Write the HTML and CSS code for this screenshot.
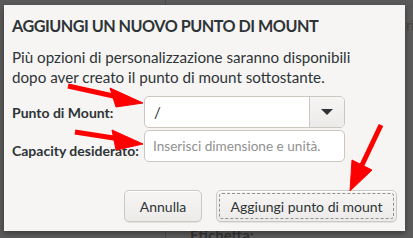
FILE: index.html
```html
<!DOCTYPE html>
<html>
<head>
<meta charset="utf-8">
<link rel="stylesheet" href="styles.css">
</head>
<body>
<div class="backdrop">
  <div class="bg-line"></div>
  <div class="bg-text bg-rip">rip</div>
  <div class="bg-text bg-eti">Etichetta:</div>
  <div class="dialog">
    <h1 class="title">AGGIUNGI UN NUOVO PUNTO DI MOUNT</h1>
    <p class="desc">Più opzioni di personalizzazione saranno disponibili<br>dopo aver creato il punto di mount sottostante.</p>
    <div class="form">
      <label class="lbl">Punto di Mount:</label>
      <div class="combo">
        <span class="combo-text">/</span>
        <span class="combo-btn"><span class="tri"></span></span>
      </div>
      <label class="lbl lbl2">Capacity desiderato:</label>
      <div class="entry">Inserisci dimensione e unità.</div>
    </div>
    <div class="actions">
      <button class="btn">Annulla</button>
      <button class="btn primary"><span class="focus">Aggiungi punto di mount</span></button>
    </div>
  </div>
  <svg class="arrows" width="413" height="238" viewBox="0 0 413 238">
    <g fill="#ff0000" stroke="#ff0000">
      <line x1="68" y1="86" x2="118" y2="97" stroke-width="5"/>
      <polygon points="143,103 110,88 116,107" stroke-width="1"/>
      <line x1="75" y1="132" x2="120" y2="139" stroke-width="5"/>
      <polygon points="143,144 112,130 116,150" stroke-width="1"/>
      <line x1="381" y1="125" x2="362" y2="165" stroke-width="5"/>
      <polygon points="350,191 352,160 372,170" stroke-width="1"/>
    </g>
  </svg>
</div>
</body>
</html>
```
FILE: styles.css
```css
* { box-sizing: border-box; }
html, body { margin: 0; padding: 0; }
body {
  width: 413px;
  height: 238px;
  overflow: hidden;
  font-family: "Lato", "Noto Sans", sans-serif;
}
.backdrop {
  position: relative;
  width: 413px;
  height: 238px;
  background: #5b5b5b;
  padding: 5px 8px 0 4px;
}
.bg-line {
  position: absolute;
  left: 165px;
  top: 0;
  width: 1px;
  height: 238px;
  background: #4a4a4a;
}
.bg-text {
  position: absolute;
  color: #3c3c3c;
  font-size: 14px;
  white-space: nowrap;
}
.bg-rip { left: 406px; top: 16px; color: #444; }
.bg-eti { left: 190px; top: 226px; font-weight: bold; color: #333; font-size: 15px; }
.dialog {
  position: relative;
  width: 401px;
  height: 226px;
  background: #f6f5f4;
  box-shadow: 0 2px 6px rgba(0,0,0,0.4);
  padding: 9px 8px 0 8px;
  color: #2e3436;
  display: flex;
  flex-direction: column;
}
.title {
  margin: 0;
  font-size: 16.2px;
  letter-spacing: -0.5px;
  font-weight: bold;
  line-height: 24px;
  white-space: nowrap;
}
.desc {
  margin: 9px 0 0 0;
  font-size: 15.2px;
  line-height: 20px;
  white-space: nowrap;
}
.form {
  display: grid;
  grid-template-columns: 132px 201px;
  grid-template-rows: 32px 32px;
  row-gap: 2px;
  margin-top: 9px;
  align-items: center;
}
.lbl {
  font-size: 14px;
  font-weight: bold;
  color: #2e3436;
  white-space: nowrap;
}
.lbl2 { padding-top: 8px; }
.combo {
  height: 32px;
  display: flex;
  border: 1px solid #cdc7c2;
  border-radius: 5px;
  background: #fff;
  overflow: hidden;
}
.combo-text {
  flex: 1;
  padding-left: 9px;
  font-size: 15px;
  line-height: 30px;
  color: #2e3436;
}
.combo-btn {
  width: 35px;
  border-left: 1px solid #cdc7c2;
  background: linear-gradient(#f6f5f4, #edebe9);
  display: flex;
  align-items: center;
  justify-content: center;
}
.tri {
  width: 0; height: 0;
  border-left: 6px solid transparent;
  border-right: 6px solid transparent;
  border-top: 6px solid #2e3436;
}
.entry {
  height: 32px;
  border: 1px solid #cdc7c2;
  border-radius: 5px;
  background: #fff;
  padding-left: 8px;
  font-size: 13.6px;
  line-height: 30px;
  color: #919191;
  white-space: nowrap;
}
.actions {
  display: flex;
  justify-content: flex-end;
  gap: 14px;
  margin-top: auto;
  margin-bottom: 9px;
  padding-right: 0;
}
.btn {
  height: 32px;
  font-family: inherit;
  font-size: 14px;
  color: #2e3436;
  border: 1px solid #cdc7c2;
  border-radius: 5px;
  background: linear-gradient(#f6f5f4, #edebe9);
  box-shadow: inset 0 1px #fff, 0 1px rgba(0,0,0,0.07);
  padding: 0;
  width: 78px;
  white-space: nowrap;
}
.btn.primary {
  width: 181px;
  padding: 2px;
}
.focus {
  display: flex;
  align-items: center;
  justify-content: center;
  height: 100%;
  border: 1px dashed #8e9192;
  border-radius: 3px;
}
.arrows {
  position: absolute;
  left: 0;
  top: 0;
}
```
